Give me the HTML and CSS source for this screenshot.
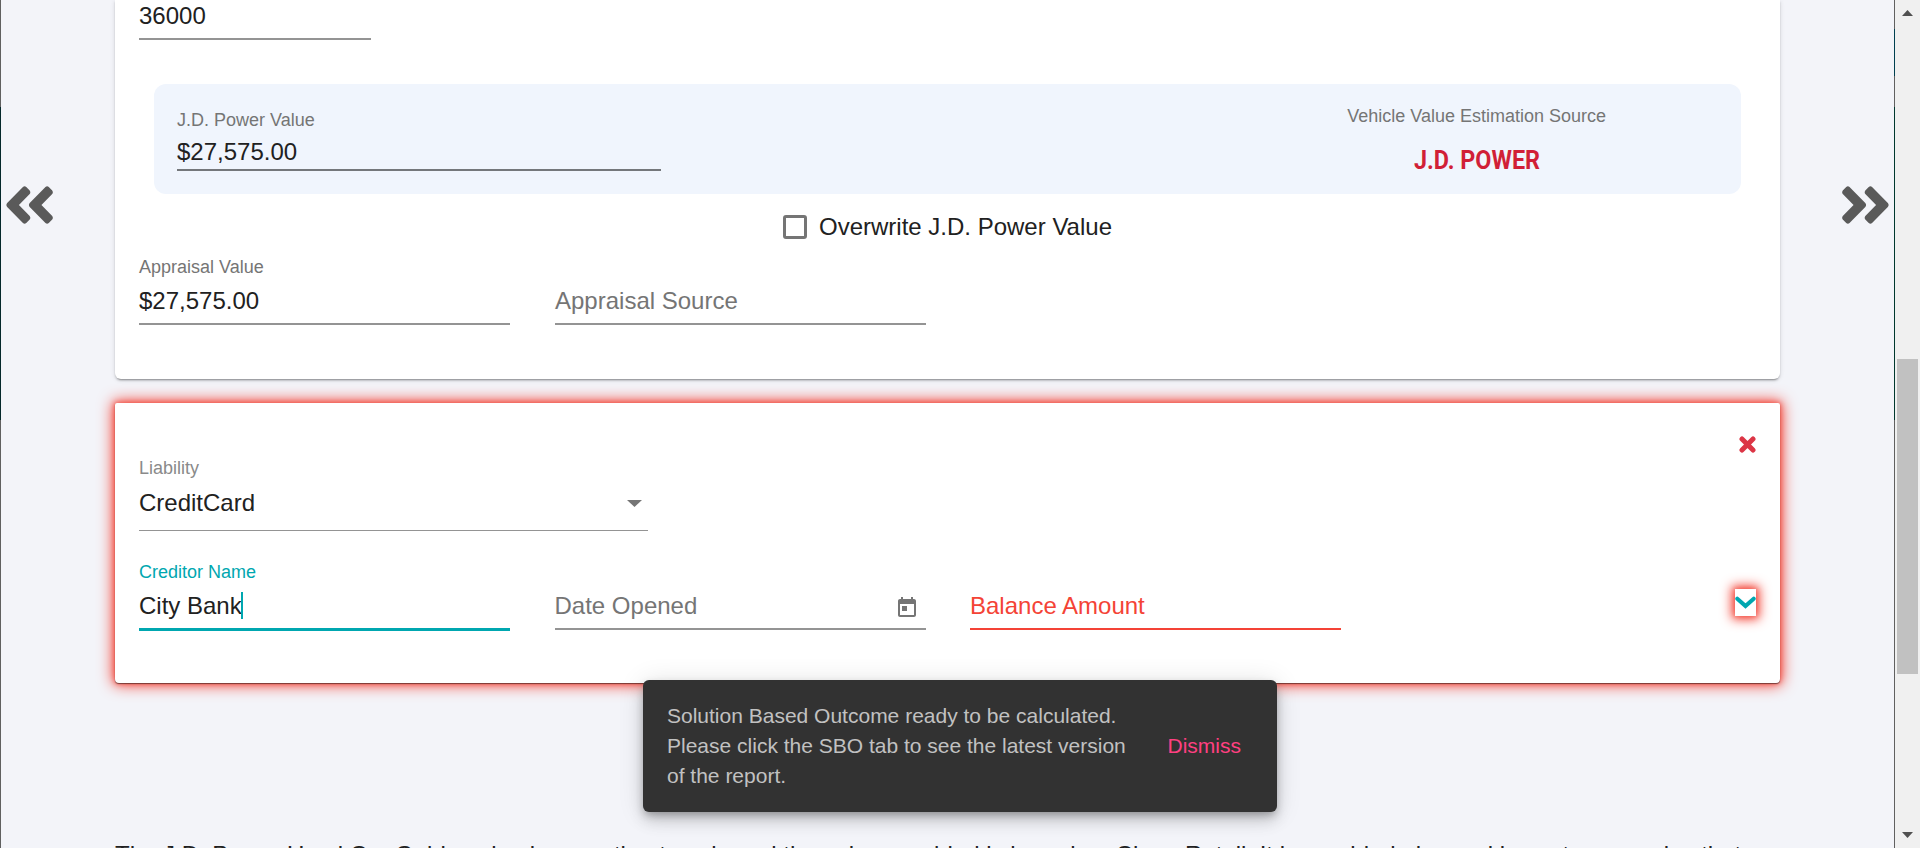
FILE: index.html
```html
<!DOCTYPE html>
<html lang="en">
<head>
<meta charset="utf-8">
<title>Assets and Liabilities</title>
<link rel="stylesheet" href="styles.css">
</head>
<body>
<div class="app">
  <aside class="edge edge-left"></aside>
  <button class="nav nav-left" aria-label="Previous">
    <svg viewBox="0 0 48 38" preserveAspectRatio="none"><path d="M1.200 17 17.300 .9Q19 -.3 20.700 .9L24.200 4.400Q25.500 6.200 24.200 8L13.200 19 24.200 30Q25.500 31.800 24.200 33.600L20.700 37.100Q19 38.300 17.300 37.100L1.200 21Q-.4 19 1.200 17zM24.200 17 40.300 .9Q42 -.3 43.700 .9L47.200 4.400Q48.500 6.200 47.200 8L36.200 19 47.200 30Q48.500 31.800 47.200 33.600L43.700 37.100Q42 38.300 40.300 37.100L24.200 21Q22.600 19 24.200 17z"/></svg>
  </button>
  <main class="content">
    <section class="card vehicle">
      <div class="field mileage"><div class="value">36000</div></div>
      <div class="power">
        <div class="power-field">
          <div class="label">J.D. Power Value</div>
          <div class="value">$27,575.00</div>
        </div>
        <div class="source">
          <div class="label">Vehicle Value Estimation Source</div>
          <svg class="logo" viewBox="0 0 126 26"><text x="0" y="22" textLength="126" lengthAdjust="spacingAndGlyphs">J.D. POWER</text></svg>
        </div>
      </div>
      <label class="overwrite"><span class="box"></span><span class="overwrite-text">Overwrite J.D. Power Value</span></label>
      <div class="row">
        <div class="field"><div class="label">Appraisal Value</div><div class="value">$27,575.00</div></div>
        <div class="field"><div class="label"></div><div class="value placeholder">Appraisal Source</div></div>
      </div>
    </section>
    <section class="card liability">
      <svg class="remove" viewBox="0 0 17 17"><path d="M3 3l11 11M14 3 3 14"/></svg>
      <div class="select">
        <div class="label soft">Liability</div>
        <div class="value">CreditCard<svg class="arrow" viewBox="0 0 15 7"><path d="M0 0h15L7.500 7z"/></svg></div>
      </div>
      <div class="row">
        <div class="field focused"><div class="label">Creditor Name</div><div class="value">City Bank<span class="caret"></span></div></div>
        <div class="field"><div class="label"></div><div class="value placeholder">Date Opened<svg class="calendar" viewBox="3 1 18 20"><path d="M19 3h-1V1h-2v2H8V1H6v2H5c-1.110 0-1.990.9-1.990 2L3 19c0 1.100.89 2 2 2h14c1.100 0 2-.9 2-2V5c0-1.100-.9-2-2-2zm0 16H5V8h14v11zM7 10h5v5H7z"/></svg></div></div>
        <div class="field invalid"><div class="label"></div><div class="value">Balance Amount</div></div>
        <button class="expand" aria-label="Expand"><svg viewBox="0 0 21 13"><path d="M2.300 2.700l8.200 7.400 8.200-7.400"/></svg></button>
      </div>
    </section>
    <p class="disclaimer">The J.D. Power Used Car Guide value is an option to sale and the value provided is based on Clean Retail. It is provided also and in customers price that</p>
  </main>
  <button class="nav nav-right" aria-label="Next">
    <svg viewBox="0 0 48 38" preserveAspectRatio="none"><path transform="matrix(-1 0 0 1 48 0)" d="M1.200 17 17.300 .9Q19 -.3 20.700 .9L24.200 4.400Q25.500 6.200 24.200 8L13.200 19 24.200 30Q25.500 31.800 24.200 33.600L20.700 37.100Q19 38.300 17.300 37.100L1.200 21Q-.4 19 1.200 17zM24.200 17 40.300 .9Q42 -.3 43.700 .9L47.200 4.400Q48.500 6.200 47.200 8L36.200 19 47.200 30Q48.500 31.800 47.200 33.600L43.700 37.100Q42 38.300 40.300 37.100L24.200 21Q22.600 19 24.200 17z"/></svg>
  </button>
  <aside class="edge edge-right"></aside>
  <div class="scrollbar">
    <svg class="tri" viewBox="0 0 11 6"><path d="M0 6h11L5.500 0z"/></svg>
    <div class="thumb"></div>
    <svg class="tri" viewBox="0 0 11 6"><path d="M0 0h11L5.500 6z"/></svg>
  </div>
</div>
<div class="snackbar">
  <div class="message">Solution Based Outcome ready to be calculated.<br>Please click the SBO tab to see the latest version<br>of the report.</div>
  <button class="dismiss">Dismiss</button>
</div>
</body>
</html>
```
FILE: styles.css
```css
* { box-sizing: border-box; }
body {
  margin: 0;
  height: 848px;
  overflow: hidden;
  background: #f3f4f9;
  color: #212121;
  font-family: "Liberation Sans", Arial, sans-serif;
  font-size: 24px;
}
svg { display: block; }
button { padding: 0; border: 0; background: none; font: inherit; }
.app { display: flex; height: 848px; overflow: hidden; }
.edge { flex: none; width: 1px; }
.edge-left { background: linear-gradient(#606060 107px, #04282b 107px 420px, #606060 420px); }
.edge-right { background: linear-gradient(#606060 29px, #004050 29px 76px, #606060 76px 107px, #00382e 107px 420px, #606060 420px); }
.nav { flex: none; height: 38px; margin-top: 186px; }
.nav svg { width: 47px; height: 38px; fill: #5a5a5a; }
.nav-left { width: 114px; padding-left: 5px; }
.nav-right { width: 114px; padding-left: 62px; }
.content { flex: none; width: 1665px; }
.card { background: #fff; }
.vehicle {
  height: 379px;
  padding: 0 24px;
  border-radius: 0 0 6px 6px;
  box-shadow: 0 3px 1px -2px rgba(0,0,0,.2), 0 2px 2px rgba(0,0,0,.14), 0 1px 5px rgba(0,0,0,.12);
}
.label { height: 21px; font-size: 18px; line-height: 21px; color: #757575; white-space: nowrap; }
.value { line-height: 28px; white-space: nowrap; }
.field { flex: none; width: 371px; border-bottom: 2px solid #949494; }
.placeholder { color: #757575; }
.mileage { width: 232px; height: 40px; padding-top: 2px; }
.power {
  display: flex;
  justify-content: space-between;
  width: 1587px;
  height: 110px;
  margin: 44px 0 0 15px;
  padding: 0 135px 0 23px;
  border-radius: 12px;
  background: #f0f5fd;
}
.power-field { width: 484px; height: 87px; padding-top: 26px; border-bottom: 2px solid #74777b; }
.power-field .value { margin-top: 7px; }
.source { display: flex; flex-direction: column; align-items: center; padding-top: 22px; }
.logo { width: 126px; height: 26px; margin-top: 20px; overflow: visible; fill: #d11f37; font: 700 26px Roboto, sans-serif; }
.overwrite { display: flex; align-items: center; gap: 12px; height: 28px; margin: 19px 0 0 644px; }
.box { width: 24px; height: 24px; border: 3px solid #757575; border-radius: 3px; }
.overwrite-text { white-space: nowrap; }
.row { display: flex; gap: 45px; }
.vehicle .row { margin-top: 16px; }
.vehicle .row .field { height: 68px; }
.vehicle .row .value { margin-top: 9px; }
.liability {
  height: 280px;
  margin-top: 24px;
  padding: 33px 24px 0;
  border-radius: 2px 2px 4px 4px;
  box-shadow: 0 1px 1px rgba(0,0,0,.5), 0 0 5px 1px rgba(244,67,54,.7), 0 0 15px 2px #f44336;
}
.remove { width: 17px; height: 17px; margin-left: auto; fill: none; stroke: #dc3545; stroke-width: 5; stroke-linecap: round; }
.select { width: 509px; height: 73px; margin-top: 5px; border-bottom: 1px solid #949494; }
.select .value { display: flex; justify-content: space-between; align-items: center; margin-top: 10px; padding-right: 6px; }
.soft { color: #8a8a8a; }
.arrow { width: 15px; height: 7px; fill: #757575; }
.liability .row { height: 69px; margin-top: 31px; gap: 44.500px; }
.liability .field { height: 68px; }
.liability .row .value { display: flex; margin-top: 9px; }
.liability .row .focused { height: 69px; border-bottom: 3px solid #00a7b0; }
.focused .label { color: #00a7b0; }
.caret { width: 2px; height: 27px; margin-left: -1px; background: #00a7b0; }
.invalid { border-color: #f44336; color: #f44336; }
.calendar { width: 18px; height: 20px; margin: 5px 10px 0 auto; fill: #757575; }
.expand {
  width: 21px;
  height: 27px;
  margin: 27px 0 0 auto;
  background: #fff;
  box-shadow: 0 0 5px 1px rgba(244,67,54,.5), 0 0 12px 3px #f44336;
}
.expand svg { width: 21px; height: 13px; margin-bottom: 1px; fill: none; stroke: #00a7b0; stroke-width: 4; stroke-linecap: round; }
.disclaimer { margin: 158px 0 0; line-height: 28px; white-space: nowrap; }
.scrollbar {
  display: flex;
  flex: none;
  flex-direction: column;
  align-items: center;
  width: 25px;
  padding: 10px 0;
  background: #f0f0f0;
}
.tri { flex: none; width: 11px; height: 6px; fill: #505050; }
.thumb { width: 21px; height: 315px; margin: 343px 0 auto; background: #c1c1c1; }
.snackbar {
  position: absolute;
  left: 643px;
  top: 680px;
  display: flex;
  align-items: center;
  width: 634px;
  height: 132px;
  padding: 0 36px 0 24px;
  border-radius: 6px;
  background: #323232;
  color: #c1c1c1;
  font-size: 21px;
  line-height: 30px;
  box-shadow: 0 4px 8px -2px rgba(0,0,0,.3), 0 9px 15px rgba(0,0,0,.14), 0 2px 27px rgba(0,0,0,.12);
}
.message { white-space: nowrap; }
.dismiss { margin-left: auto; color: #ff4081; }
```
